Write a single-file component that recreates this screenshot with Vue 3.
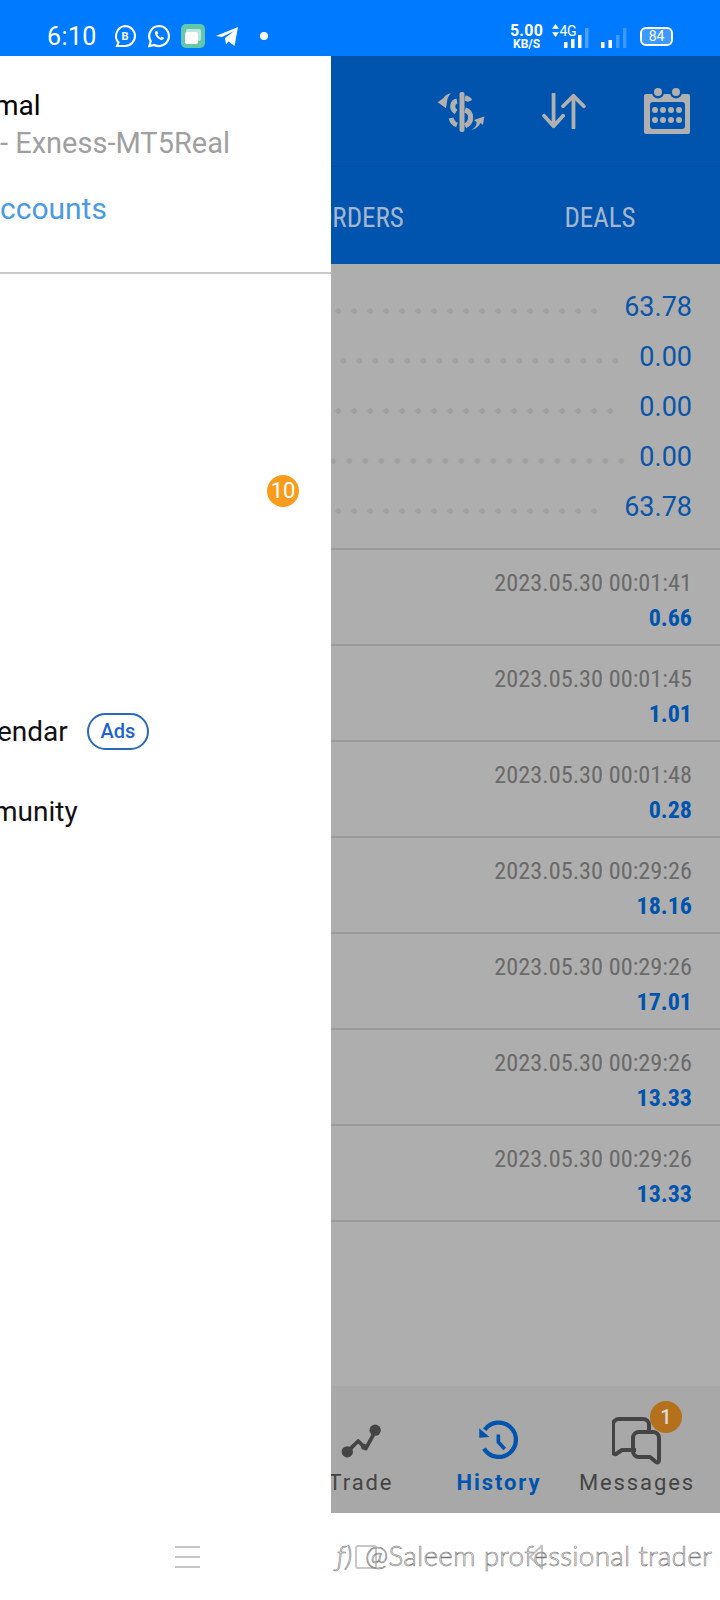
<script setup>
const summary = [
  { v: '63.78', gap: 22 },
  { v: '0.00', gap: 16 },
  { v: '0.00', gap: 21 },
  { v: '0.00', gap: 10 },
  { v: '63.78', gap: 22 }
]
const deals = [
  { t: '2023.05.30 00:01:41', v: '0.66' },
  { t: '2023.05.30 00:01:45', v: '1.01' },
  { t: '2023.05.30 00:01:48', v: '0.28' },
  { t: '2023.05.30 00:29:26', v: '18.16' },
  { t: '2023.05.30 00:29:26', v: '17.01' },
  { t: '2023.05.30 00:29:26', v: '13.33' },
  { t: '2023.05.30 00:29:26', v: '13.33' }
]
</script>

<template>
  <div class="phone">
    <div class="status">
      <span class="clock">6:10</span>
      <svg class="ic22" viewBox="0 0 24 24"><path d="M12 2a10 10 0 0 1 0 20H4l1.500-3.500A10 10 0 0 1 12 2z" fill="none" stroke="#fff" stroke-width="2"/><text x="12" y="16" text-anchor="middle" font-size="11" font-weight="700" fill="#fff" font-family="Roboto">B</text></svg>
      <svg class="ic22" viewBox="0 0 24 24"><path d="M12 2a10 10 0 1 1-4.600 18.900L2.400 22l1.300-4.800A10 10 0 0 1 12 2z" fill="none" stroke="#fff" stroke-width="2.200"/><path d="M8.500 7.200c-1 1-.9 3 .9 5.300 2 2.500 4.300 3.700 5.800 3.300 1-.2 1.800-1.100 1.700-2l-2.300-1.200-1 1.100c-1-.3-2.700-2-3.200-3.200l.9-1-1-2.400z" fill="#fff"/></svg>
      <div class="appicon"><span class="back"></span><span class="front"></span></div>
      <svg class="ic22" viewBox="0 0 24 24"><path d="M1 12 23 3l-3.500 19-6-4.500-2.500 3-1-6.500 9-7-12 6z" fill="#fff"/></svg>
      <span class="sdot"></span>
      <div class="status-right">
        <div class="speed"><b>5.00</b><small>KB/S</small></div>
        <div class="net">
          <svg width="7" height="13" viewBox="0 0 8 15"><path d="M4 0 8 5.500H0zM4 15 0 9.500h8z" fill="#fff"/></svg>
          <span class="four">4G</span>
        </div>
        <svg class="bars" width="26" height="20" viewBox="0 0 26 20"><rect x="0" y="14" width="3.500" height="6" fill="#fff"/><rect x="7" y="11" width="3.500" height="9" fill="#fff"/><rect x="14" y="7" width="3.500" height="13" fill="#fff"/><rect x="21" y="0" width="3.500" height="20" fill="#4da3ff"/></svg>
        <svg class="bars2" width="26" height="20" viewBox="0 0 26 20"><rect x="0" y="14" width="3.500" height="6" fill="#fff"/><rect x="7.500" y="12" width="3.500" height="8" fill="#fff"/><rect x="15" y="7" width="3.500" height="13" fill="#3c99ff"/><rect x="22" y="0" width="3.500" height="20" fill="#3c99ff"/></svg>
        <div class="batt"><span>84</span></div>
      </div>
    </div>

    <div class="body">
      <aside class="drawer">
        <div class="acct">
          <div class="a-name">mal</div>
          <div class="a-server">- Exness-MT5Real</div>
          <div class="a-link">ccounts</div>
        </div>
        <div class="menu">
          <div class="mrow"></div>
          <div class="mrow"></div>
          <div class="mrow end"><span class="count">10</span></div>
          <div class="mrow"></div>
          <div class="mrow"></div>
          <div class="mrow"><span class="mtext">endar</span><span class="ads">Ads</span></div>
          <div class="mrow"><span class="mtext tight">munity</span></div>
        </div>
      </aside>

      <main class="main">
        <header class="head">
          <svg class="h1" width="48" height="40" viewBox="0 0 48 40">
            <rect x="22.500" y="0" width="5" height="40" rx="2" fill="#b0b0b0"/>
            <g fill="none" stroke="#b0b0b0" stroke-width="5">
              <path d="M20 9c-5 1-6 8-1 11"/><path d="M28 6c3 .5 4 1 5 3"/><path d="M28 18c7 2 8 12 0 16"/><path d="M20 33c-3-1-5-3-6-7"/>
            </g>
            <path d="M14 1.300C10 2 8 3.500 6.500 6L.7 10.300 9 16.300 10 10C10 7 11.500 4 14 1.300z" fill="#b0b0b0"/>
            <path d="M34 38C38 36 40 33 39.500 30L37 28 47.300 24.500 46 33 43.500 31C42 34 39 37 34 38z" fill="#b0b0b0"/>
          </svg>
          <svg class="h2" width="44" height="36" viewBox="0 0 46 38"><path d="M12 1v34M2 24l10 11 10-11M33 37V3M22 14 33 3l11 11" fill="none" stroke="#b0b0b0" stroke-width="4" stroke-linecap="round" stroke-linejoin="round"/></svg>
          <svg class="h3" width="46" height="46" viewBox="0 0 46 46">
            <rect x="0" y="6" width="46" height="40" rx="2" fill="#b0b0b0"/>
            <circle cx="14" cy="4.500" r="6" fill="#0054ad"/><circle cx="32" cy="4.500" r="6" fill="#0054ad"/>
            <circle cx="14" cy="4" r="4" fill="#b0b0b0"/><circle cx="32" cy="4" r="4" fill="#b0b0b0"/>
            <rect x="6" y="14" width="35" height="27" rx="3" fill="#0054ad"/>
            <g fill="#b0b0b0"><circle cx="11" cy="22" r="3"/><circle cx="19" cy="22" r="3"/><circle cx="27" cy="22" r="3"/><circle cx="35" cy="22" r="3"/><circle cx="11" cy="32" r="3"/><circle cx="19" cy="32" r="3"/><circle cx="27" cy="32" r="3"/><circle cx="35" cy="32" r="3"/></g>
          </svg>
        </header>
        <nav class="tabs"><span>ORDERS</span><span>DEALS</span></nav>

        <section class="content">
          <div class="summary">
            <div v-for="(s, i) in summary" :key="i" class="srow">
              <span class="leader" :style="{ marginRight: s.gap + 'px' }"></span>
              <span class="sval">{{ s.v }}</span>
            </div>
          </div>
          <div v-for="(d, i) in deals" :key="i" class="deal">
            <div class="time">{{ d.t }}</div>
            <div class="dval">{{ d.v }}</div>
          </div>
        </section>

        <footer class="bottom">
          <div class="nitem">
            <div class="nicon"><svg width="40" height="34" viewBox="0 0 42 36"><path d="M6 30 18 18l8 8L36 8" fill="none" stroke="#444" stroke-width="4" stroke-linejoin="round"/><circle cx="6.500" cy="29.500" r="6" fill="#444"/><circle cx="36" cy="6.500" r="6" fill="#444"/><circle cx="24" cy="24" r="3" fill="#444"/></svg></div>
            <span>Trade</span>
          </div>
          <div class="nitem on">
            <div class="nicon"><svg width="42" height="42" viewBox="0 0 44 44"><path d="M7 10.300A18 18 0 1 1 6.300 30" fill="none" stroke="#0054ad" stroke-width="4.500"/><path d="M1.300 8.700v10l10.700-1z" fill="#0054ad"/><path d="M21.300 15.300V23l6.700 7.300" fill="none" stroke="#0054ad" stroke-width="3.800"/></svg></div>
            <span>History</span>
          </div>
          <div class="nitem msg">
            <div class="nicon"><svg width="50" height="48" viewBox="0 0 50 48"><path d="M24 33H10l-6 4c-2 .5-3-.5-3-2V8a6 6 0 0 1 6-6h24a6 6 0 0 1 6 6v5" fill="none" stroke="#444" stroke-width="4" stroke-linejoin="round"/><path d="M27 15h14a6 6 0 0 1 6 6v22c0 2-1 3-3 2l-6-5H27a6 6 0 0 1-6-6V21a6 6 0 0 1 6-6z" fill="none" stroke="#444" stroke-width="4" stroke-linejoin="round"/></svg></div>
            <span>Messages</span>
            <b class="nbadge">1</b>
          </div>
        </footer>
      </main>
    </div>

    <div class="sysbar">
      <div class="burger"><i></i><i></i><i></i></div>
      <div class="mark">
        <svg class="home" width="22" height="24" viewBox="0 0 22 24"><rect x="1" y="1" width="20" height="22" rx="2" fill="none" stroke="#c8c8c8" stroke-width="2"/></svg>
        <svg class="backbtn" width="16" height="26" viewBox="0 0 16 26"><path d="M14 1.500 2 13l12 11.500z" fill="none" stroke="#c4c4c4" stroke-width="2.200" stroke-linejoin="round"/></svg>
        <span class="mtxt"><span class="fx">ƒ)</span>@Saleem professional trader</span>
      </div>
    </div>
  </div>
</template>

<style scoped>
.phone { width: 720px; height: 1600px; display: flex; flex-direction: column; overflow: hidden; background: #fff; font-family: Roboto, "Liberation Sans", sans-serif; }

.status { height: 56px; flex: none; background: #007bff; display: flex; align-items: center; padding: 16px 0 0 47px; box-sizing: border-box; color: #fff; position: relative; }
.clock { font-size: 25px; letter-spacing: .4px; width: 66px; flex: none; }
.ic22 { width: 24px; height: 24px; flex: none; margin-right: 10px; }
.appicon { width: 24px; height: 24px; border-radius: 5px; background: #62c8ab; position: relative; flex: none; margin-right: 10px; }
.appicon .back { position: absolute; left: 5px; top: 5px; width: 15px; height: 12px; border-radius: 2px; background: #b9e8da; }
.appicon .front { position: absolute; left: 4px; top: 8px; width: 13px; height: 12px; border-radius: 2px; background: #fff; }
.sdot { width: 8px; height: 8px; border-radius: 50%; background: #fff; margin-left: 11px; }
.status-right { margin-left: auto; display: flex; align-items: center; padding-right: 47px; }
.speed { display: flex; flex-direction: column; align-items: center; width: 34px; line-height: 1; }
.speed b { font-size: 16px; font-weight: 700; letter-spacing: .3px; }
.speed small { font-size: 12px; font-weight: 700; margin-top: -1px; }
.net { display: flex; align-items: flex-start; margin-left: 8px; margin-top: -10px; gap: 1px; }
.four { font-size: 14px; line-height: 15px; letter-spacing: -.5px; }
.bars { margin-left: -12px; margin-top: 4px; }
.bars2 { margin-left: 11px; margin-top: 4px; }
.batt { width: 33px; height: 19px; box-sizing: border-box; border: 2px solid #fff; border-radius: 6px; margin-left: 13px; display: flex; align-items: center; justify-content: center; background: #3c99ff; font-size: 14px; }

.body { flex: 1; display: flex; min-height: 0; }
.drawer { width: 331px; flex: none; background: #fff; display: flex; flex-direction: column; }
.acct { height: 218px; flex: none; box-sizing: border-box; border-bottom: 2px solid #c9c9c9; padding-top: 31px; }
.a-name { font-size: 28px; line-height: 38px; color: #000; margin-left: -6px; }
.a-server { font-size: 29px; line-height: 38px; color: #a0a0a0; margin-top: -1px; }
.a-link { font-size: 30px; line-height: 38px; color: #4a9be0; margin-top: 28px; }
.menu { padding-top: 17px; }
.mrow { height: 80px; display: flex; align-items: center; }
.mrow.end { justify-content: flex-end; padding-right: 32px; }
.count { width: 32px; height: 32px; border-radius: 50%; background: #f99c1e; color: #fff; font-size: 22px; line-height: 32px; text-align: center; }
.mtext { font-size: 28px; color: #111; margin-left: -3px; }
.mtext.tight { margin-left: -7px; }
.ads { margin-left: 19px; width: 62px; height: 37px; box-sizing: border-box; border: 2px solid #2a68b8; border-radius: 19px; color: #1f64cc; font-size: 20px; font-weight: 500; text-align: center; line-height: 33px; }

.main { flex: 1; min-width: 0; display: flex; flex-direction: column; overflow: hidden; background: #aeaeae; }
.head { height: 111px; flex: none; box-sizing: border-box; background: #0054ad; border-bottom: 1px solid #004c9e; display: flex; align-items: center; justify-content: flex-end; padding-right: 30px; }
.h1 { margin-right: 57px; margin-top: 2px; }
.h2 { margin-right: 58px; }
.tabs { height: 97px; flex: none; box-sizing: border-box; padding-top: 4px; background: #0054ad; display: grid; grid-template-columns: 240px 240px; margin-left: -91px; color: #a4b5cf; font-family: "Roboto Condensed", Roboto, sans-serif; font-stretch: 75%; font-size: 27px; align-items: center; text-align: center; }

.content { flex: 1; min-height: 0; }
.summary { padding: 17px 28px 17px 0; border-bottom: 2px solid #9a9a9a; }
.srow { height: 50px; display: flex; align-items: center; }
.leader { flex: 1; height: 16px; background: radial-gradient(circle at center, #a0a0a0 2.500px, transparent 3.100px) right center / 16px 16px repeat-x; margin-top: 10px; }
.sval { font-size: 27px; color: #0a55a8; line-height: 1; margin-top: 2px; }
.deal { height: 96px; box-sizing: border-box; border-bottom: 2px solid #9a9a9a; padding: 18px 28px 0 0; text-align: right; font-family: "Roboto Condensed", Roboto, sans-serif; font-stretch: 75%; }
.time { font-size: 24.300px; line-height: 30px; color: #6a6a6a; }
.dval { font-size: 24px; line-height: 40px; font-weight: 700; color: #0054ad; }

.bottom { height: 127px; flex: none; background: #a8a8a8; display: grid; grid-template-columns: 138px 138px 138px; margin-left: -39px; }
.nitem { display: flex; flex-direction: column; align-items: center; justify-content: flex-end; padding-bottom: 17px; color: #444; font-size: 22px; line-height: 26px; letter-spacing: 1.900px; position: relative; gap: 5px; }
.nicon { height: 48px; display: flex; align-items: center; justify-content: center; }
.nitem.on { color: #0054ad; font-weight: 700; }
.nbadge { position: absolute; left: 82px; top: 15px; width: 32px; height: 32px; border-radius: 50%; background: #b4701a; color: #ddd; font-size: 20px; font-weight: 500; line-height: 32px; text-align: center; letter-spacing: 0; }

.sysbar { height: 87px; flex: none; background: #fff; position: relative; display: flex; align-items: center; padding-left: 175px; box-sizing: border-box; }
.burger { width: 25px; display: flex; flex-direction: column; gap: 8px; }
.burger i { display: block; height: 2px; background: #c6c6c6; }
.mark { position: absolute; left: 337px; top: 25px; }
.mtxt { font-family: Lato, Roboto, sans-serif; font-size: 28px; font-weight: 300; color: #fff; -webkit-text-stroke: .6px #777; letter-spacing: .2px; position: relative; white-space: nowrap; }
.fx { font-style: italic; display: inline-block; width: 28px; }
.home { position: absolute; left: 18px; top: 7px; }
.backbtn { position: absolute; left: 191px; top: 6px; }
</style>
